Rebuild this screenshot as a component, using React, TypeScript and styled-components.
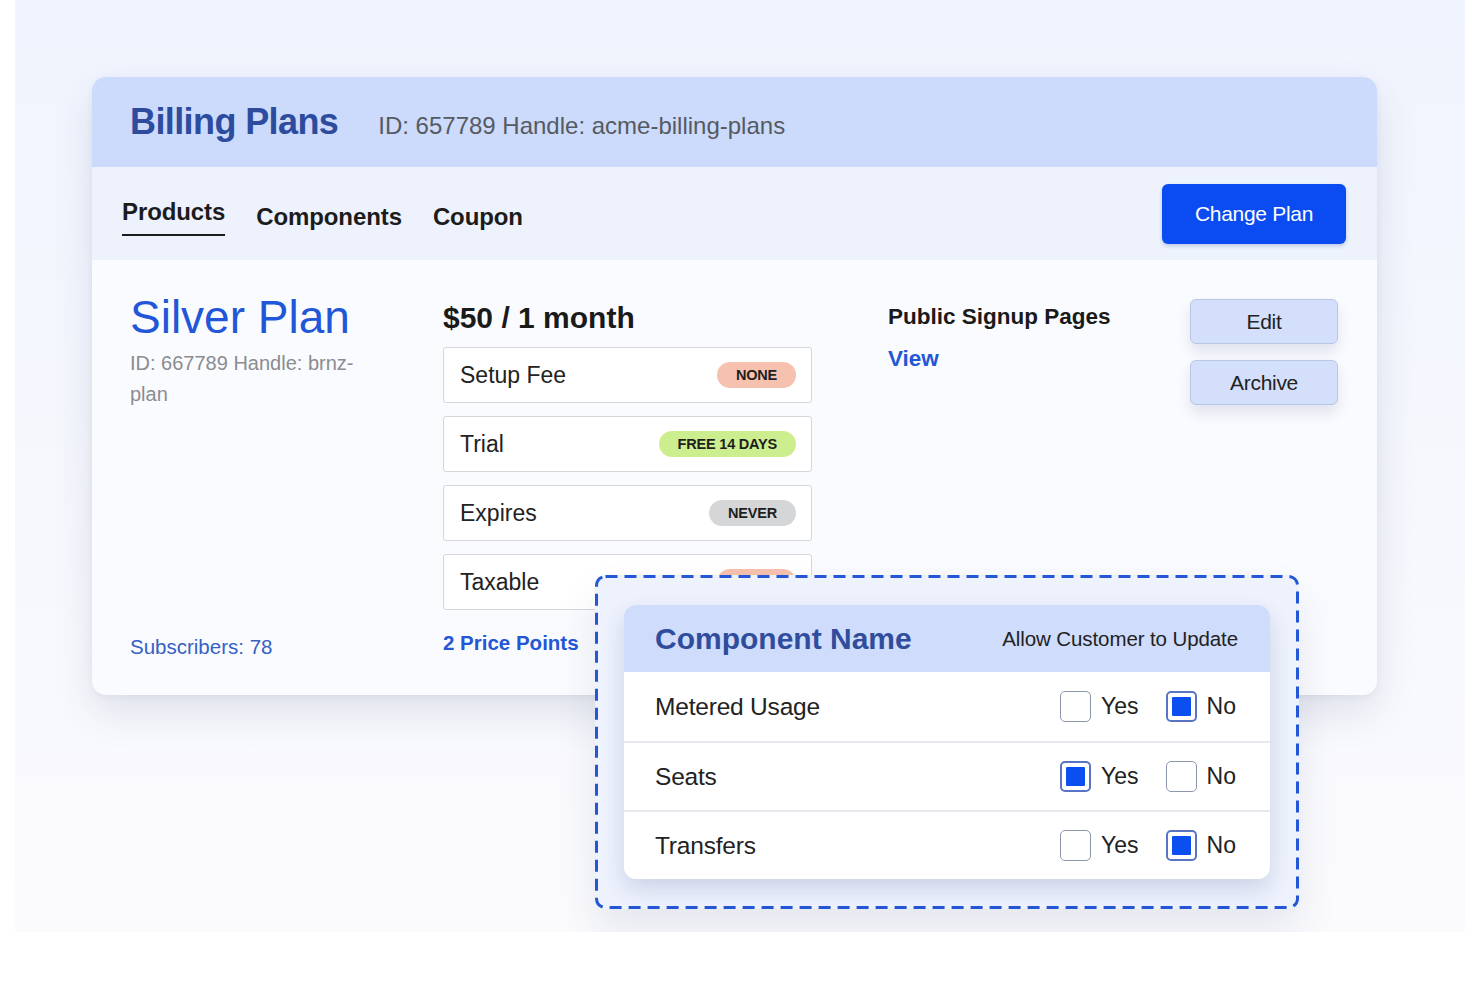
import styled, { createGlobalStyle } from "styled-components";

const GlobalStyle = createGlobalStyle`
  html, body {
    margin: 0;
    padding: 0;
    background: #ffffff;
  }
  body {
    font-family: "Liberation Sans", Arial, sans-serif;
    color: #222222;
  }
  * {
    box-sizing: border-box;
  }
`;

const Stage = styled.div`
  margin: 0 15px;
  height: 932px;
  padding: 77px 88px 0 77px;
  background: linear-gradient(180deg, #f0f4fe 0%, #f5f7fd 45%, #fbfbfd 100%);
`;

const Card = styled.div`
  position: relative;
  width: 1285px;
  border-radius: 14px;
  background: #fafbfe;
  box-shadow: 0 18px 40px rgba(40, 60, 110, 0.12), 0 2px 6px rgba(40, 60, 110, 0.06);
`;

const Header = styled.div`
  height: 90px;
  display: flex;
  align-items: center;
  gap: 40px;
  padding: 0 38px;
  background: #ccdafb;
  border-radius: 14px 14px 0 0;
`;

const Title = styled.h1`
  margin: 0;
  font-size: 36px;
  font-weight: 700;
  letter-spacing: -0.6px;
  color: #2d4c9e;
`;

const Meta = styled.span`
  font-size: 24px;
  color: #555a63;
  padding-top: 8px;
`;

const TabBar = styled.div`
  height: 93px;
  display: flex;
  align-items: center;
  padding: 0 31px 0 30px;
  background: #edf2fd;
`;

const Tabs = styled.nav`
  display: flex;
  align-items: center;
  gap: 31px;
  flex: 1;
  padding-top: 6px;
`;

const Tab = styled.span<{ $active?: boolean }>`
  font-size: 24px;
  font-weight: 700;
  letter-spacing: -0.1px;
  color: #1c1c1c;
  padding-bottom: ${(p) => (p.$active ? "8px" : "0")};
  border-bottom: ${(p) => (p.$active ? "2px solid #1c1c1c" : "none")};
`;

const PrimaryButton = styled.button`
  width: 184px;
  height: 60px;
  border: none;
  border-radius: 6px;
  background: #0a4cf2;
  color: #ffffff;
  font-family: inherit;
  font-size: 21px;
  letter-spacing: -0.3px;
  box-shadow: 0 2px 4px rgba(10, 40, 140, 0.2);
`;

const Content = styled.div`
  display: flex;
  padding: 30px 39px 36px 38px;
  min-height: 435px;
  border-radius: 0 0 14px 14px;
`;

const PlanColumn = styled.div`
  width: 313px;
  display: flex;
  flex-direction: column;
`;

const PlanName = styled.h2`
  margin: 0;
  font-size: 46px;
  line-height: 54px;
  font-weight: 400;
  color: #1f57d8;
`;

const PlanMeta = styled.p`
  margin: 4px 0 0;
  width: 232px;
  font-size: 20px;
  line-height: 31px;
  color: #8a8c90;
`;

const BlueLink = styled.a<{ $bold?: boolean; $size?: number }>`
  font-size: ${(p) => p.$size ?? 20.5}px;
  line-height: 24px;
  font-weight: ${(p) => (p.$bold ? 700 : 400)};
  color: ${(p) => (p.$bold ? "#2357d6" : "#3560c4")};
  text-decoration: none;
`;

const Subscribers = styled(BlueLink)`
  margin-top: auto;
`;

const PriceColumn = styled.div`
  width: 369px;
  padding-top: 10px;
  display: flex;
  flex-direction: column;
`;

const Price = styled.div`
  font-size: 30px;
  line-height: 36px;
  font-weight: 700;
  color: #1a1a1a;
  margin-bottom: 11px;
`;

const TermList = styled.div`
  display: flex;
  flex-direction: column;
  gap: 13px;
  margin-bottom: 21px;
`;

const TermRow = styled.div`
  height: 56px;
  display: flex;
  align-items: center;
  justify-content: space-between;
  padding: 0 15px 0 16px;
  background: #ffffff;
  border: 1px solid #d6d7da;
  border-radius: 3px;
`;

const TermLabel = styled.span`
  font-size: 23px;
  color: #222222;
`;

const badgeColors = {
  red: "#f6c1ae",
  green: "#cdee8e",
  grey: "#d5d6d8",
};

const Badge = styled.span<{ $tone: keyof typeof badgeColors }>`
  height: 26px;
  display: inline-flex;
  align-items: center;
  padding: 0 19px;
  border-radius: 13px;
  background: ${(p) => badgeColors[p.$tone]};
  font-size: 14.5px;
  font-weight: 700;
  letter-spacing: -0.2px;
  color: #1e1e1e;
`;

const SignupColumn = styled.div`
  flex: 1;
  padding: 13px 0 0 76px;
  display: flex;
  flex-direction: column;
  gap: 16px;
`;

const SignupTitle = styled.div`
  font-size: 22.5px;
  line-height: 28px;
  font-weight: 700;
  color: #1a1a1a;
`;

const ActionColumn = styled.div`
  width: 148px;
  padding-top: 9px;
  display: flex;
  flex-direction: column;
  gap: 16px;
`;

const SoftButton = styled.button`
  height: 45px;
  border: 1px solid #b9c6e6;
  border-radius: 6px;
  background: #d4e0fb;
  font-family: inherit;
  font-size: 21px;
  letter-spacing: -0.3px;
  color: #222222;
  box-shadow: 0 8px 14px rgba(40, 60, 120, 0.12);
`;

const Overlay = styled.div`
  position: absolute;
  left: 503px;
  top: 498px;
  width: 704px;
  height: 334px;
  padding: 30px 29px;
  border-radius: 10px;
  background: #eef2fd;
  box-shadow: 0 22px 40px rgba(40, 60, 110, 0.1);
`;

const DashFrame = styled.svg`
  position: absolute;
  inset: 0;
  width: 100%;
  height: 100%;
  pointer-events: none;
`;

const Table = styled.div`
  position: relative;
  border-radius: 12px;
  background: #ffffff;
  overflow: hidden;
  box-shadow: 0 10px 22px rgba(30, 50, 110, 0.16);
`;

const TableHead = styled.div`
  height: 67px;
  display: flex;
  align-items: center;
  justify-content: space-between;
  padding: 0 32px 0 31px;
  background: #cfdcfb;
`;

const HeadTitle = styled.span`
  font-size: 30px;
  font-weight: 700;
  color: #2f4d9c;
`;

const HeadNote = styled.span`
  font-size: 20.5px;
  letter-spacing: -0.1px;
  color: #222222;
`;

const TableRow = styled.div`
  height: 69px;
  display: flex;
  align-items: center;
  justify-content: space-between;
  padding: 0 34px 0 31px;
  & + & {
    border-top: 2px solid #e6e8ee;
  }
`;

const RowLabel = styled.span`
  font-size: 24.5px;
  letter-spacing: -0.2px;
  color: #222222;
`;

const Options = styled.div`
  display: flex;
  align-items: center;
  gap: 27px;
`;

const Option = styled.label`
  display: flex;
  align-items: center;
  gap: 10px;
  font-size: 23px;
  color: #222222;
`;

const Box = styled.span<{ $checked?: boolean }>`
  width: 31px;
  height: 31px;
  border-radius: 5px;
  background: #ffffff;
  border: ${(p) => (p.$checked ? "2px solid #5a74c4" : "1.5px solid #8d96ac")};
  display: flex;
  align-items: center;
  justify-content: center;
  &::after {
    content: "";
    display: ${(p) => (p.$checked ? "block" : "none")};
    width: 19px;
    height: 19px;
    background: #0b4ff0;
    border-radius: 1px;
  }
`;

const terms: { label: string; badge: string; tone: keyof typeof badgeColors }[] = [
  { label: "Setup Fee", badge: "NONE", tone: "red" },
  { label: "Trial", badge: "FREE 14 DAYS", tone: "green" },
  { label: "Expires", badge: "NEVER", tone: "grey" },
  { label: "Taxable", badge: "NONE", tone: "red" },
];

const components = [
  { name: "Metered Usage", yes: false },
  { name: "Seats", yes: true },
  { name: "Transfers", yes: false },
];

export default function App() {
  return (
    <>
      <GlobalStyle />
      <Stage>
        <Card>
          <Header>
            <Title>Billing Plans</Title>
            <Meta>ID: 657789 Handle: acme-billing-plans</Meta>
          </Header>
          <TabBar>
            <Tabs>
              <Tab $active>Products</Tab>
              <Tab>Components</Tab>
              <Tab>Coupon</Tab>
            </Tabs>
            <PrimaryButton>Change Plan</PrimaryButton>
          </TabBar>
          <Content>
            <PlanColumn>
              <PlanName>Silver Plan</PlanName>
              <PlanMeta>ID: 667789 Handle: brnz-plan</PlanMeta>
              <Subscribers>Subscribers: 78</Subscribers>
            </PlanColumn>
            <PriceColumn>
              <Price>$50 / 1 month</Price>
              <TermList>
                {terms.map((t) => (
                  <TermRow key={t.label}>
                    <TermLabel>{t.label}</TermLabel>
                    <Badge $tone={t.tone}>{t.badge}</Badge>
                  </TermRow>
                ))}
              </TermList>
              <BlueLink $bold>2 Price Points</BlueLink>
            </PriceColumn>
            <SignupColumn>
              <SignupTitle>Public Signup Pages</SignupTitle>
              <BlueLink $bold $size={22.5}>View</BlueLink>
            </SignupColumn>
            <ActionColumn>
              <SoftButton>Edit</SoftButton>
              <SoftButton>Archive</SoftButton>
            </ActionColumn>
          </Content>

          <Overlay>
            <DashFrame viewBox="0 0 704 334">
              <rect
                x="1.5"
                y="1.5"
                width="701"
                height="331"
                rx="9"
                fill="none"
                stroke="#2357d6"
                strokeWidth="3"
                strokeDasharray="12 7"
              />
            </DashFrame>
            <Table>
              <TableHead>
                <HeadTitle>Component Name</HeadTitle>
                <HeadNote>Allow Customer to Update</HeadNote>
              </TableHead>
              {components.map((c) => (
                <TableRow key={c.name}>
                  <RowLabel>{c.name}</RowLabel>
                  <Options>
                    <Option>
                      <Box $checked={c.yes} />
                      Yes
                    </Option>
                    <Option>
                      <Box $checked={!c.yes} />
                      No
                    </Option>
                  </Options>
                </TableRow>
              ))}
            </Table>
          </Overlay>
        </Card>
      </Stage>
    </>
  );
}
